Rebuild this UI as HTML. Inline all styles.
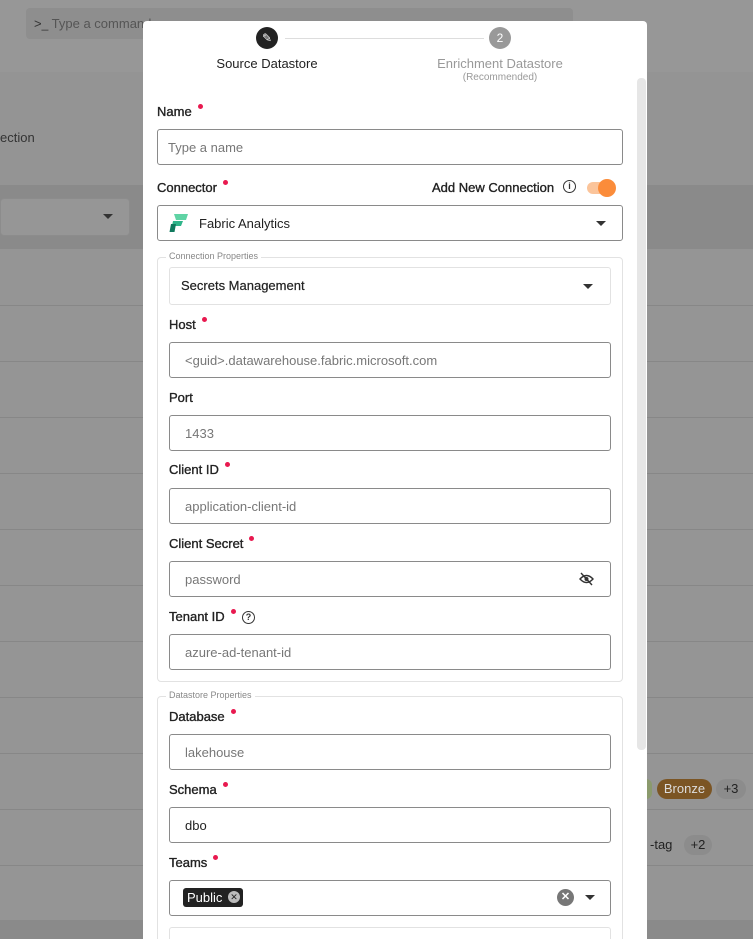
<!DOCTYPE html>
<html style="width:753px;height:939px;overflow:hidden"><head><style>
*{box-sizing:border-box;margin:0;padding:0}
body{width:753px;height:939px;overflow:hidden;background:#999;font-family:"Liberation Sans",sans-serif;position:relative}
.a{position:absolute}
.lbl{position:absolute;font-size:13px;color:#222;-webkit-text-stroke:0.35px #222}
.lbl i{display:inline-block;width:5px;height:5px;border-radius:50%;background:#e8194f;margin-left:6px;vertical-align:7px;-webkit-text-stroke:0}
.in{position:absolute;border:1px solid #8a8a8a;border-radius:3px;background:#fff;font-size:13px;color:#777;padding-left:15px;display:flex;align-items:center}
.fs{position:absolute;border:1px solid #e2e2e2;border-radius:4px}
.lg{position:absolute;font-size:9px;color:#888;background:#fff;padding:0 3px}
.tri{position:absolute;width:0;height:0;border-left:5px solid transparent;border-right:5px solid transparent;border-top:5px solid #333}
.row{position:absolute;left:0;width:753px;height:1px;background:#878787}
</style></head><body>
<div class="a" style="left:0;top:0;width:753px;height:72px;background:#979797"></div>
<div class="a" style="left:26px;top:8px;width:547px;height:31px;background:#8e8e8e;border-radius:4px"></div>
<div class="a" style="left:34px;top:16px;font-size:13px;color:#333">&gt;<span style="font-size:12px">_</span> <span style="color:#555">Type a command</span></div>
<div class="a" style="left:0;top:72px;width:753px;height:113px;background:#949494"></div>
<div class="a" style="left:0;top:130px;font-size:13px;color:#333">ection</div>
<div class="a" style="left:0;top:185px;width:753px;height:64px;background:#8a8a8a"></div>
<div class="a" style="left:0;top:198px;width:130px;height:38px;background:#969696;border-radius:4px;border:1px solid #8c8c8c"></div>
<div class="tri" style="left:103px;top:214px"></div>
<div class="a" style="left:0;top:249px;width:753px;height:671px;background:#959595"></div>
<div class="row" style="top:305px"></div><div class="row" style="top:361px"></div><div class="row" style="top:417px"></div><div class="row" style="top:473px"></div><div class="row" style="top:529px"></div><div class="row" style="top:585px"></div><div class="row" style="top:641px"></div><div class="row" style="top:697px"></div><div class="row" style="top:753px"></div><div class="row" style="top:809px"></div><div class="row" style="top:865px"></div>
<div class="a" style="left:0;top:920px;width:753px;height:19px;background:#8a8a8a"></div>
<div class="a" style="left:640px;top:779px;width:12px;height:20px;background:#8b9a6d;border-radius:10px"></div>
<div class="a" style="left:657px;top:779px;width:55px;height:20px;background:#7b5524;border-radius:10px;color:#ddd;font-size:13px;text-align:center;line-height:20px">Bronze</div>
<div class="a" style="left:716px;top:779px;width:30px;height:20px;background:#8c8c8c;border-radius:10px;color:#222;font-size:13px;text-align:center;line-height:20px">+3</div>
<div class="a" style="left:650px;top:835px;font-size:13px;color:#222;line-height:20px">-tag</div>
<div class="a" style="left:684px;top:835px;width:28px;height:20px;background:#8c8c8c;border-radius:10px;color:#222;font-size:13px;text-align:center;line-height:20px">+2</div>

<div class="a" style="left:143px;top:21px;width:504px;height:918px;background:#fff;border-radius:4px 4px 0 0;overflow:hidden">
<div class="a" style="left:494px;top:57px;width:9px;height:672px;background:#e6e6e6;border-radius:4px"></div>
<div class="a" style="left:113px;top:6px;width:22px;height:22px;border-radius:50%;background:#222;color:#fff;font-size:12px;text-align:center;line-height:22px">✎</div>
<div class="a" style="left:142px;top:17px;width:199px;height:1px;background:#ddd"></div>
<div class="a" style="left:346px;top:6px;width:22px;height:22px;border-radius:50%;background:#999;color:#fff;font-size:12px;text-align:center;line-height:22px">2</div>
<div class="a" style="left:57px;top:35px;width:134px;text-align:center;font-size:13px;color:#222">Source Datastore</div>
<div class="a" style="left:277px;top:35px;width:160px;text-align:center;font-size:13px;color:#999">Enrichment Datastore</div>
<div class="a" style="left:277px;top:51px;width:160px;text-align:center;font-size:10px;color:#999">(Recommended)</div>

<div class="lbl" style="left:14px;top:83px">Name<i></i></div>
<div class="in" style="left:14px;top:108px;width:466px;height:36px;padding-left:10px">Type a name</div>
<div class="lbl" style="left:14px;top:159px">Connector<i></i></div>
<div class="lbl" style="left:289px;top:159px">Add New Connection</div>
<div class="a" style="left:420px;top:159px;width:13px;height:13px;border:1.3px solid #333;border-radius:50%;font-size:9px;text-align:center;line-height:11px;font-weight:bold;color:#333">i</div>
<div class="a" style="left:444px;top:161px;width:28px;height:12px;border-radius:6px;background:#fbc49a"></div>
<div class="a" style="left:455px;top:158px;width:18px;height:18px;border-radius:50%;background:#fb8c3a"></div>
<div class="in" style="left:14px;top:184px;width:466px;height:36px;color:#222;padding-left:10px">
<svg width="22" height="22" viewBox="0 0 22 22" style="margin-right:9px"><path d="M6 2h14l-2 6H8z" fill="#5fd3a4"/><path d="M5 9h10l-2 5H4z" fill="#2fb58a"/><path d="M3 12h5l-1.5 8H1.5z" fill="#117a5e"/></svg>Fabric Analytics</div>
<div class="tri" style="left:453px;top:200px"></div>

<div class="fs" style="left:14px;top:236px;width:466px;height:425px"></div>
<div class="lg" style="left:23px;top:230px">Connection Properties</div>
<div class="a" style="left:26px;top:246px;width:442px;height:38px;border:1px solid #e2e2e2;border-radius:3px;font-size:13px;color:#222;padding-left:11px;line-height:36px;-webkit-text-stroke:0.2px #222">Secrets Management</div>
<div class="tri" style="left:440px;top:263px"></div>
<div class="lbl" style="left:26px;top:296px">Host<i></i></div>
<div class="in" style="left:26px;top:321px;width:442px;height:36px">&lt;guid&gt;.datawarehouse.fabric.microsoft.com</div>
<div class="lbl" style="left:26px;top:369px">Port</div>
<div class="in" style="left:26px;top:394px;width:442px;height:36px">1433</div>
<div class="lbl" style="left:26px;top:441px">Client ID<i></i></div>
<div class="in" style="left:26px;top:467px;width:442px;height:36px">application-client-id</div>
<div class="lbl" style="left:26px;top:515px">Client Secret<i></i></div>
<div class="in" style="left:26px;top:540px;width:442px;height:36px">password</div>
<svg class="a" style="left:436px;top:551px" width="15" height="14" viewBox="0 0 15 14"><path d="M1 7q6.5-7 13 0q-6.5 7-13 0z" fill="none" stroke="#333" stroke-width="1.4"/><circle cx="7.5" cy="7" r="2" fill="#333"/><path d="M2 1l11 12" stroke="#333" stroke-width="1.4"/></svg>
<div class="lbl" style="left:26px;top:588px">Tenant ID<i></i></div>
<div class="a" style="left:99px;top:590px;width:13px;height:13px;border:1.3px solid #333;border-radius:50%;font-size:9px;text-align:center;line-height:11px;font-weight:bold;color:#333">?</div>
<div class="in" style="left:26px;top:613px;width:442px;height:36px">azure-ad-tenant-id</div>

<div class="fs" style="left:14px;top:675px;width:466px;height:260px"></div>
<div class="lg" style="left:23px;top:669px">Datastore Properties</div>
<div class="lbl" style="left:26px;top:688px">Database<i></i></div>
<div class="in" style="left:26px;top:713px;width:442px;height:36px">lakehouse</div>
<div class="lbl" style="left:26px;top:761px">Schema<i></i></div>
<div class="in" style="left:26px;top:786px;width:442px;height:36px;color:#222">dbo</div>
<div class="lbl" style="left:26px;top:834px">Teams<i></i></div>
<div class="in" style="left:26px;top:859px;width:442px;height:36px"></div>
<div class="a" style="left:40px;top:867px;width:60px;height:19px;background:#222;border-radius:3px;color:#fff;font-size:13px;line-height:19px;padding-left:4px">Public</div>
<div class="a" style="left:85px;top:870px;width:12px;height:12px;border-radius:50%;background:#bbb;color:#222;font-size:9px;text-align:center;line-height:12px">✕</div>
<div class="a" style="left:414px;top:868px;width:17px;height:17px;border-radius:50%;background:#777;color:#fff;font-size:11px;text-align:center;line-height:17px;font-weight:bold">✕</div>
<div class="tri" style="left:442px;top:874px"></div>
<div class="a" style="left:26px;top:906px;width:442px;height:20px;border:1px solid #e2e2e2;border-radius:3px"></div>
</div>
</body></html>
